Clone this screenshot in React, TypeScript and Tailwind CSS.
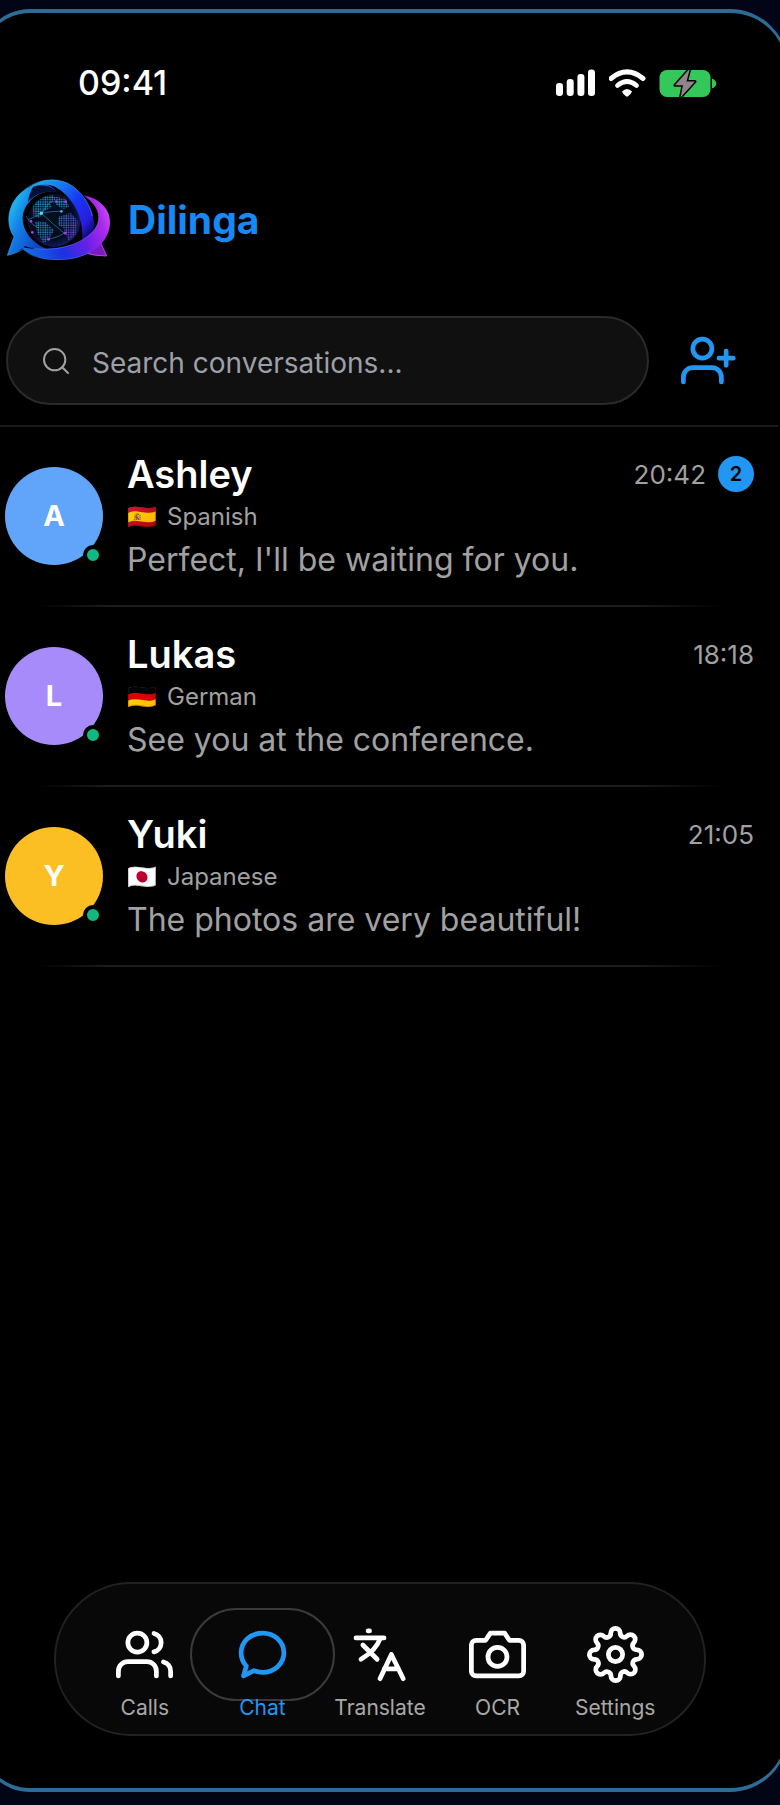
import { Search } from 'lucide-react'
import type { ReactNode } from 'react'

interface Conversation {
  name: string
  flag: string
  language: string
  message: string
  time: string
  unread?: number
  avatarClass: string
}

const CONVERSATIONS: Conversation[] = [
  { name: 'Ashley', flag: '🇪🇸', language: 'Spanish', message: "Perfect, I'll be waiting for you.", time: '20:42', unread: 2, avatarClass: 'bg-[#60a5fa]' },
  { name: 'Lukas', flag: '🇩🇪', language: 'German', message: 'See you at the conference.', time: '18:18', avatarClass: 'bg-[#a78bfa]' },
  { name: 'Yuki', flag: '🇯🇵', language: 'Japanese', message: 'The photos are very beautiful!', time: '21:05', avatarClass: 'bg-[#fbbf24]' },
]

function StatusIcons() {
  return (
    <div className="flex items-center gap-3">
      <svg width="41" height="28" viewBox="0 0 41 28" fill="#fff" aria-hidden="true">
        <rect x="0" y="14" width="7" height="13" rx="3.2" />
        <rect x="10.7" y="10" width="7" height="17" rx="3.2" />
        <rect x="21.4" y="5" width="7" height="22" rx="3.2" />
        <rect x="32" y="0.5" width="7" height="26.5" rx="3.2" />
      </svg>
      <svg width="38" height="28" viewBox="0 0 38 28" fill="none" aria-hidden="true">
        <path d="M2 9.5Q18-3.7 34 9.5" stroke="#fff" strokeWidth="5" strokeLinecap="round" />
        <path d="M8.5 16.5Q18 8.7 27.5 16.5" stroke="#fff" strokeWidth="4.8" strokeLinecap="round" />
        <path d="M13 22.5Q18 17.5 23 22.5Q22.5 24.5 19 27.3Q18 28 17 27.3Q13.5 24.5 13 22.5Z" fill="#fff" />
      </svg>
      <svg width="58" height="29" viewBox="0 0 58 29" aria-hidden="true">
        <rect x="0.5" y="1" width="51" height="27" rx="7.5" fill="#34c759" />
        <path d="M53 9.5Q57.3 11.5 57.3 14.5T53 19.5Z" fill="#34c759" />
        <path d="M29.5 1L16 16.3H24L21.5 28.5L36 12.5H27.5L30.5 1Z" fill="#8e8688" stroke="#000" strokeWidth="3" strokeLinejoin="round" paintOrder="stroke" />
      </svg>
    </div>
  )
}

function DilingaLogo() {
  return (
    <svg width="104" height="84" viewBox="18 36 312 252" fill="none" aria-hidden="true">
      <defs>
        <linearGradient id="ringLeft" x1="25" y1="130" x2="150" y2="190" gradientUnits="userSpaceOnUse">
          <stop offset="0" stopColor="#20bcf0" />
          <stop offset="0.35" stopColor="#1480e8" />
          <stop offset="1" stopColor="#0b3cc0" />
        </linearGradient>
        <linearGradient id="ringTop" x1="95" y1="60" x2="275" y2="200" gradientUnits="userSpaceOnUse">
          <stop offset="0" stopColor="#1cb0ec" />
          <stop offset="0.3" stopColor="#1678f0" />
          <stop offset="0.6" stopColor="#1834f4" />
          <stop offset="0.85" stopColor="#2a1ce0" />
          <stop offset="1" stopColor="#0c0a70" />
        </linearGradient>
        <linearGradient id="ringPink" x1="70" y1="250" x2="330" y2="160" gradientUnits="userSpaceOnUse">
          <stop offset="0" stopColor="#1270e6" />
          <stop offset="0.4" stopColor="#1c30e0" />
          <stop offset="0.68" stopColor="#6a20e8" />
          <stop offset="0.9" stopColor="#ac28ec" />
          <stop offset="1" stopColor="#c048f0" />
        </linearGradient>
        <linearGradient id="land" x1="90" y1="100" x2="240" y2="220" gradientUnits="userSpaceOnUse">
          <stop offset="0" stopColor="#19a8c4" />
          <stop offset="0.5" stopColor="#2a86c8" />
          <stop offset="1" stopColor="#8a2cd8" />
        </linearGradient>
        <radialGradient id="globe" cx="0.45" cy="0.45" r="0.55">
          <stop offset="0" stopColor="#03101c" />
          <stop offset="0.75" stopColor="#040a1e" />
          <stop offset="1" stopColor="#0c1c58" />
        </radialGradient>
        <pattern id="dots" width="7" height="7" patternUnits="userSpaceOnUse">
          <circle cx="3" cy="3" r="2.6" fill="#fff" />
        </pattern>
        <mask id="dotMask">
          <rect x="60" y="60" width="220" height="210" fill="url(#dots)" />
        </mask>
      </defs>

      {/* Right tail */}
      <path d="M255 240L298 222L320 270Q284 270 252 260Z" fill="#7a1cc0" stroke="#c83cee" strokeWidth="3" />

      {/* Globe */}
      <circle cx="163" cy="163" r="79" fill="url(#globe)" />
      <g fill="url(#land)" mask="url(#dotMask)">
        <path d="M98 122Q118 90 158 88L172 100L150 112L156 124L132 136L118 156L100 150Z" />
        <path d="M166 92L196 98L208 122L190 130L168 116Z" />
        <path d="M104 166L136 168L162 192L148 220L130 232L112 200Z" />
        <path d="M176 152L212 140L234 166L226 206L206 224L190 186L174 176Z" />
      </g>
      <path d="M78 150Q95 178 116 186M88 160L124 142L150 108L196 107M124 142L162 176L194 202M146 220Q180 212 196 200M124 142Q158 134 184 136" stroke="#2aa4e4" strokeWidth="2" opacity="0.8" />
      <g fill="#a83cf5">
        <circle cx="97" cy="199" r="4" />
        <circle cx="93" cy="166" r="4" />
        <circle cx="146" cy="220" r="4" />
        <circle cx="169" cy="107" r="4" />
        <circle cx="197" cy="107" r="4" />
        <circle cx="195" cy="201" r="4.5" />
        <circle cx="184" cy="136" r="4" fill="#38b8ff" />
        <circle cx="124" cy="142" r="5" fill="#5ae0ff" />
      </g>

      {/* Rings */}
      <path d="M22 268L42 212C15 175 22 110 70 75C85 64 100 56 125 52C140 55 160 62 170 78C120 68 72 105 68 155C67 195 95 230 140 250C110 250 85 245 75 240C60 255 45 263 22 268Z" fill="url(#ringLeft)" />
      <path d="M100 62C130 52 160 62 176 84C150 70 110 78 84 108C86 90 92 74 100 62Z" fill="#041034" />
      <path d="M85 66C120 38 175 30 220 62C265 95 295 165 277 205C268 222 258 226 246 228C254 150 215 90 165 62C140 52 110 54 85 66Z" fill="url(#ringTop)" />
      <path d="M22 268L42 212C15 175 22 110 70 75C110 38 175 30 220 62C250 85 270 118 277 150M22 268C45 263 60 255 72 248" stroke="#3cb8f8" strokeWidth="2" opacity="0.8" />
      <path d="M250 88C300 98 330 130 330 168C330 238 255 282 180 282C125 282 85 268 62 242C110 254 190 250 235 228C285 203 303 170 294 140C287 118 270 102 250 88Z" fill="url(#ringPink)" />
      <path d="M72 252C110 290 220 290 274 256" stroke="#2a8cf0" strokeWidth="2" opacity="0.7" />
      <path d="M100 247C150 254 200 246 235 228C285 203 303 170 294 140" stroke="#8078ff" strokeWidth="2" opacity="0.7" />
    </svg>
  )
}

function ConversationRow({ conversation }: { conversation: Conversation }) {
  const { name, flag, language, message, time, unread, avatarClass } = conversation

  return (
    <li>
      <a href="#" className="flex h-[178px] items-center gap-6">
        {/* Avatar + presence */}
        <div className={`relative flex size-[98px] shrink-0 items-center justify-center rounded-full text-[29px] font-bold text-white ${avatarClass}`}>
          {name[0]}
          <span className="absolute right-0 bottom-0 size-5 rounded-full border-4 border-black bg-[#10b981]" />
        </div>

        <div className="min-w-0 flex-1 pt-[2px]">
          <div className="flex h-[50px] items-center justify-between">
            <h2 className="text-[38px] leading-[50px] font-semibold text-white">{name}</h2>
            <div className="flex items-center gap-3">
              <time className="text-[26px] text-[#a1a1a1]">{time}</time>
              {unread && (
                <span className="flex size-9 items-center justify-center rounded-full bg-[#2196f3] text-[20px] font-semibold text-black">
                  {unread}
                </span>
              )}
            </div>
          </div>
          <p className="flex items-center gap-[10px] text-[24px] leading-[36px] text-[#a1a1a1]">
            <span>{flag}</span>
            {language}
          </p>
          <p className="truncate text-[32px] leading-[50px] text-[#a1a1a1]">{message}</p>
        </div>
      </a>
      <div className="h-[2px] bg-[linear-gradient(to_right,transparent_4%,#1c1c1c_14%,#1c1c1c_84%,transparent_96%)]" />
    </li>
  )
}

function Icon({ children }: { children: ReactNode }) {
  return (
    <svg viewBox="0 0 24 24" className="size-[57px]" fill="none" stroke="currentColor" strokeWidth="2" strokeLinecap="round" strokeLinejoin="round" aria-hidden="true">
      {children}
    </svg>
  )
}

function NavItem({ label, active, children }: { label: string; active?: boolean; children: ReactNode }) {
  return (
    <button className={`flex flex-1 flex-col items-center gap-[11px] ${active ? 'text-[#2196f3]' : 'text-white'}`}>
      <span className="relative">
        {active && <span className="absolute -inset-x-11 -inset-y-[18px] rounded-full border-2 border-[#3a3a3a]" />}
        <Icon>{children}</Icon>
      </span>
      <span className={`relative text-[21px] leading-7 ${active ? '' : 'text-[#a8a8a8]'}`}>{label}</span>
    </button>
  )
}

export default function App() {
  return (
    <div className="flex min-h-screen flex-col overflow-hidden bg-[#020516] pt-[9px] pb-[13px] font-['Inter',sans-serif]">
      <main className="-mr-2 -ml-5 flex flex-1 flex-col rounded-l-[50px] rounded-r-[58px] border-x-2 border-y-4 border-[#2c6c96] bg-black pr-2 pl-[18px]">
        {/* Status bar */}
        <div className="flex items-center justify-between pt-[46px] pr-[61px] pl-[78px]">
          <time className="text-[34px] leading-[48px] font-medium text-white">09:41</time>
          <StatusIcons />
        </div>

        <header className="flex items-center gap-[18px] pt-[71px] pl-[6px]">
          <DilingaLogo />
          <h1 className="text-[39px] font-bold text-[#1689f5]">Dilinga</h1>
        </header>

        {/* Search */}
        <div className="flex items-center gap-8 border-b-2 border-[#191919] pt-[54px] pr-10 pb-5 pl-[6px]">
          <label className="flex h-[89px] flex-1 items-center gap-5 rounded-full border-2 border-[#2a2a2a] bg-[#101010] px-8">
            <Search size={32} strokeWidth={1.5} className="text-[#a1a1a1]" />
            <input
              type="search"
              aria-label="Search conversations"
              placeholder="Search conversations..."
              className="min-w-0 flex-1 bg-transparent pt-1 text-[28px] text-white placeholder-[#9ca0a8] outline-none"
            />
          </label>
          <button aria-label="Add contact" className="text-[#2196f3]">
            <Icon>
              <path d="M17 21v-2a4 4 0 0 0-4-4H5a4 4 0 0 0-4 4v2" />
              <circle cx="9" cy="7" r="4" />
              <path d="M19 8v6M22 11h-6" />
            </Icon>
          </button>
        </div>

        <ul className="pr-6 pl-[5px]">
          {CONVERSATIONS.map((conversation) => (
            <ConversationRow key={conversation.name} conversation={conversation} />
          ))}
        </ul>

        {/* Bottom tab bar */}
        <nav className="mt-auto mr-[72px] mb-[52px] ml-[54px] flex h-[154px] items-start rounded-full border-2 border-[#222] bg-[#080808] px-[30px] pt-[42px]">
          <NavItem label="Calls">
            <path d="M17 21v-2a4 4 0 0 0-4-4H5a4 4 0 0 0-4 4v2" />
            <circle cx="9" cy="7" r="4" />
            <path d="M23 21v-2a4 4 0 0 0-3-3.87" />
            <path d="M16 3.13a4 4 0 0 1 0 7.75" />
          </NavItem>
          <NavItem label="Chat" active>
            <path d="M12 3c5 0 9 3.6 9 8.25s-4 8.25-9 8.25c-1.3 0-2.5-.2-3.6-.7L4 21l1.2-4.1C3.8 15.4 3 13.6 3 11.25 3 6.6 7 3 12 3z" />
          </NavItem>
          <NavItem label="Translate">
            <path d="M7.2 2.1h.6" />
            <path d="M2.1 5h11.8" />
            <path d="M12.3 5.3C11 9 8.5 11.5 4.2 14" />
            <path d="M5 8l6 6" />
            <path d="M12.2 22.2L17 12l5 10.2M14 18h6" />
          </NavItem>
          <NavItem label="OCR">
            <path d="M23 19a2 2 0 0 1-2 2H3a2 2 0 0 1-2-2V8a2 2 0 0 1 2-2h4l2-3h6l2 3h4a2 2 0 0 1 2 2z" />
            <circle cx="12" cy="13" r="4" />
          </NavItem>
          <NavItem label="Settings">
            <circle cx="12" cy="12" r="3" />
            <path d="M19.4 15a1.65 1.65 0 0 0 .33 1.82l.06.06a2 2 0 0 1 0 2.83 2 2 0 0 1-2.83 0l-.06-.06a1.65 1.65 0 0 0-1.82-.33 1.65 1.65 0 0 0-1 1.51V21a2 2 0 0 1-2 2 2 2 0 0 1-2-2v-.09A1.65 1.65 0 0 0 9 19.4a1.65 1.65 0 0 0-1.82.33l-.06.06a2 2 0 0 1-2.83 0 2 2 0 0 1 0-2.83l.06-.06a1.65 1.65 0 0 0 .33-1.82 1.65 1.65 0 0 0-1.51-1H3a2 2 0 0 1-2-2 2 2 0 0 1 2-2h.09A1.65 1.65 0 0 0 4.6 9a1.65 1.65 0 0 0-.33-1.82l-.06-.06a2 2 0 0 1 0-2.83 2 2 0 0 1 2.83 0l.06.06a1.65 1.65 0 0 0 1.82.33H9a1.65 1.65 0 0 0 1-1.51V3a2 2 0 0 1 2-2 2 2 0 0 1 2 2v.09a1.65 1.65 0 0 0 1 1.51 1.65 1.65 0 0 0 1.82-.33l.06-.06a2 2 0 0 1 2.83 0 2 2 0 0 1 0 2.83l-.06.06a1.65 1.65 0 0 0-.33 1.82V9a1.65 1.65 0 0 0 1.51 1H21a2 2 0 0 1 2 2 2 2 0 0 1-2 2h-.09a1.65 1.65 0 0 0-1.51 1z" />
          </NavItem>
        </nav>
      </main>
    </div>
  )
}
